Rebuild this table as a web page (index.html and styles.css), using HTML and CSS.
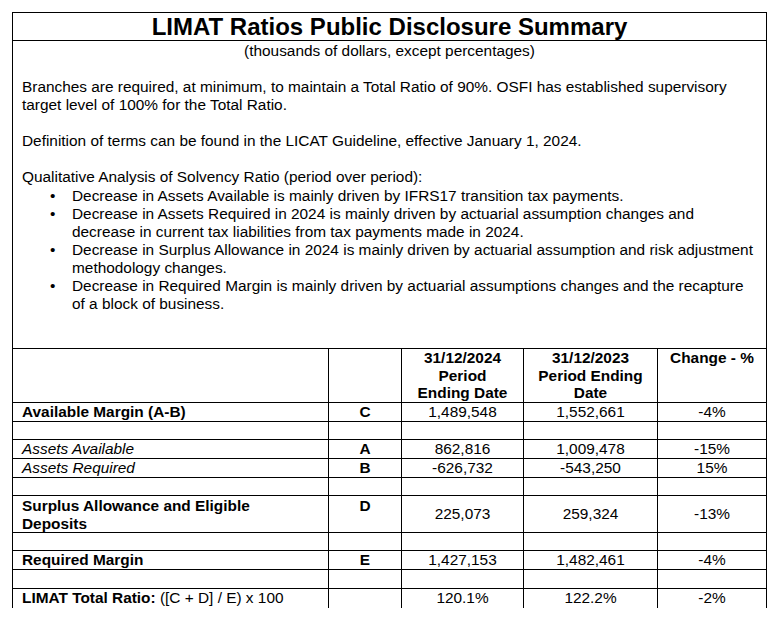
FILE: index.html
```html
<!DOCTYPE html>
<html>
<head>
<meta charset="utf-8">
<link rel="stylesheet" href="styles.css">
</head>
<body>
<div class="page">
  <section class="intro">
    <h1 class="title">LIMAT Ratios Public Disclosure Summary</h1>
    <div class="body">
      <p class="subtitle">(thousands of dollars, except percentages)</p>
      <p class="para first">Branches are required, at minimum, to maintain a Total Ratio of 90%. OSFI has established supervisory<br>target level of 100% for the Total Ratio.</p>
      <p class="para">Definition of terms can be found in the LICAT Guideline, effective January 1, 2024.</p>
      <p class="para">Qualitative Analysis of Solvency Ratio (period over period):</p>
      <ul class="bullets">
        <li><span class="dot">•</span><span>Decrease in Assets Available is mainly driven by IFRS17 transition tax payments.</span></li>
        <li><span class="dot">•</span><span>Decrease in Assets Required in 2024 is mainly driven by actuarial assumption changes and<br>decrease in current tax liabilities from tax payments made in 2024.</span></li>
        <li><span class="dot">•</span><span>Decrease in Surplus Allowance in 2024 is mainly driven by actuarial assumption and risk adjustment<br>methodology changes.</span></li>
        <li><span class="dot">•</span><span>Decrease in Required Margin is mainly driven by actuarial assumptions changes and the recapture<br>of a block of business.</span></li>
      </ul>
    </div>
  </section>
  <div class="grid">
    <div class="c"></div>
    <div class="c"></div>
    <div class="c ctr b">31/12/2024<br>Period<br>Ending Date</div>
    <div class="c ctr b">31/12/2023<br>Period Ending<br>Date</div>
    <div class="c ctr b">Change - %</div>

    <div class="c lbl b">Available Margin (A-B)</div>
    <div class="c ctr b">C</div>
    <div class="c ctr">1,489,548</div>
    <div class="c ctr">1,552,661</div>
    <div class="c ctr">-4%</div>

    <div class="c"></div><div class="c"></div><div class="c"></div><div class="c"></div><div class="c"></div>

    <div class="c lbl i">Assets Available</div>
    <div class="c ctr b">A</div>
    <div class="c ctr">862,816</div>
    <div class="c ctr">1,009,478</div>
    <div class="c ctr">-15%</div>

    <div class="c lbl i">Assets Required</div>
    <div class="c ctr b">B</div>
    <div class="c ctr">-626,732</div>
    <div class="c ctr">-543,250</div>
    <div class="c ctr">15%</div>

    <div class="c"></div><div class="c"></div><div class="c"></div><div class="c"></div><div class="c"></div>

    <div class="c lbl b pt">Surplus Allowance and Eligible<br>Deposits</div>
    <div class="c ctr b pt">D</div>
    <div class="c ctr mid">225,073</div>
    <div class="c ctr mid">259,324</div>
    <div class="c ctr mid">-13%</div>

    <div class="c"></div><div class="c"></div><div class="c"></div><div class="c"></div><div class="c"></div>

    <div class="c lbl b">Required Margin</div>
    <div class="c ctr b">E</div>
    <div class="c ctr">1,427,153</div>
    <div class="c ctr">1,482,461</div>
    <div class="c ctr">-4%</div>

    <div class="c"></div><div class="c"></div><div class="c"></div><div class="c"></div><div class="c"></div>

    <div class="c lbl last"><b>LIMAT Total Ratio:</b> ([C + D] / E) x 100</div>
    <div class="c last"></div>
    <div class="c ctr last">120.1%</div>
    <div class="c ctr last">122.2%</div>
    <div class="c ctr last">-2%</div>
  </div>
</div>
</body>
</html>
```
FILE: styles.css
```css
html, body {
  margin: 0;
  padding: 0;
  background: #fff;
}
body {
  padding: 12px 0 0 12px;
  font-family: "Liberation Sans", Arial, sans-serif;
  color: #000;
  font-size: 15.4px;
}
.page {
  width: 755px;
}
.intro {
  border: 1px solid #000;
  border-bottom: none;
  padding-bottom: 35px;
}
.title {
  margin: 0;
  height: 27px;
  line-height: 27px;
  font-size: 24px;
  font-weight: bold;
  text-align: center;
  border-bottom: 1px solid #000;
}
.body {
  padding: 0 2px 0 9px;
  line-height: 18px;
  white-space: nowrap;
}
.subtitle {
  margin: 1px 0 0 0;
  text-align: center;
  padding-right: 7px;
}
.para {
  margin: 18px 0 0 0;
}
.bullets {
  list-style: none;
  margin: 1px 0 0 0;
  padding: 0 0 0 28px;
}
.bullets li {
  display: flex;
}
.dot {
  width: 22px;
  flex: none;
}
.grid {
  display: grid;
  grid-template-columns: 316px 73px 122px 134px 109px;
  grid-template-rows: 54px 19px 18px 19px 19px 18px 37px 18px 19px 19px 19px;
  border-top: 1px solid #000;
  border-left: 1px solid #000;
  width: 754px;
  line-height: 17.5px;
}
.c {
  box-sizing: border-box;
  border-right: 1px solid #000;
  border-bottom: 1px solid #000;
  white-space: nowrap;
  overflow: hidden;
}
.c.last {
  border-bottom: none;
}
.lbl {
  padding-left: 9px;
}
.ctr {
  text-align: center;
}
.b {
  font-weight: bold;
}
.i {
  font-style: italic;
}
.pt {
  padding-top: 1px;
}
.mid {
  display: flex;
  align-items: center;
  justify-content: center;
}
```
